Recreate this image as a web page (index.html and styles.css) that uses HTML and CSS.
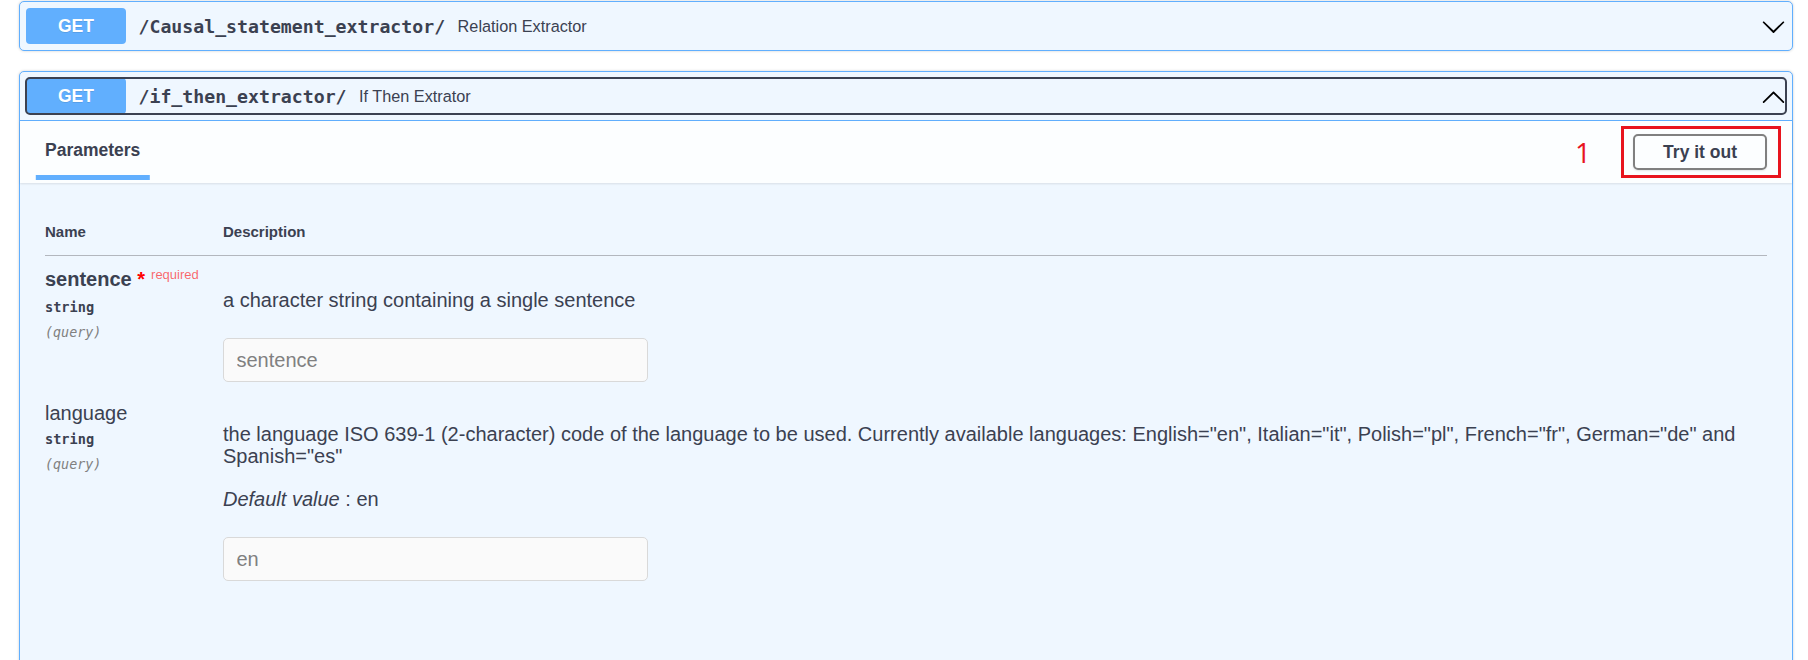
FILE: index.html
```html
<!DOCTYPE html>
<html lang="en">
<head>
<meta charset="utf-8">
<title>Swagger</title>
<link rel="stylesheet" href="styles.css">
</head>
<body>
<div class="page">
  <div class="opblock">
    <div class="summary">
      <div class="summary-control">
        <span class="method">GET</span>
        <span class="path">/Causal_statement_extractor/</span>
        <span class="desc">Relation Extractor</span>
        <svg class="arrow" viewBox="0 0 20 20" width="25" height="25"><path d="M17.418 6.109c.272-.268.709-.268.979 0s.271.701 0 .969l-7.908 7.83c-.27.268-.707.268-.979 0l-7.908-7.83c-.27-.268-.27-.701 0-.969.271-.268.709-.268.979 0L10 13.25l7.418-7.141z"/></svg>
      </div>
    </div>
  </div>

  <div class="opblock open">
    <div class="summary">
      <div class="summary-control focused">
        <span class="method">GET</span>
        <span class="path">/if_then_extractor/</span>
        <span class="desc">If Then Extrator</span>
        <svg class="arrow" viewBox="0 0 20 20" width="25" height="25"><path d="M17.418 14.908c.272.268.709.268.979 0s.271-.701 0-.969l-7.908-7.83c-.27-.268-.707-.268-.979 0l-7.908 7.83c-.27.268-.27.701 0 .969.271.268.709.268.979 0L10 7.767l7.418 7.141z"/></svg>
      </div>
    </div>
    <div class="section-header">
      <div class="tab-header"><h4><span>Parameters</span></h4></div>
      <span class="step">1</span>
      <div class="try-wrap"><button class="btn" type="button">Try it out</button></div>
    </div>
    <div class="table-container">
      <table class="parameters">
        <thead>
          <tr><th class="col-name">Name</th><th class="col-desc">Description</th></tr>
        </thead>
        <tbody>
          <tr>
            <td class="cell-name">
              <div class="param-name required">sentence<span class="star">&nbsp;*</span><span class="req">required</span></div>
              <div class="param-type">string</div>
              <div class="param-in">(query)</div>
            </td>
            <td class="cell-desc">
              <div class="markdown"><p>a character string containing a single sentence</p></div>
              <div class="input-wrap"><input type="text" placeholder="sentence" disabled></div>
            </td>
          </tr>
          <tr>
            <td class="cell-name">
              <div class="param-name">language</div>
              <div class="param-type">string</div>
              <div class="param-in">(query)</div>
            </td>
            <td class="cell-desc">
              <div class="markdown"><p>the language ISO 639-1 (2-character) code of the language to be used. Currently available languages: English="en", Italian="it", Polish="pl", French="fr", German="de" and Spanish="es"</p></div>
              <div class="markdown"><p><i>Default value</i> : en</p></div>
              <div class="input-wrap"><input type="text" value="en" disabled></div>
            </td>
          </tr>
        </tbody>
      </table>
    </div>
  </div>
</div>
</body>
</html>
```
FILE: styles.css
```css
* { box-sizing: border-box; }

body {
  margin: 0;
  background: #fff;
  font-family: "Liberation Sans", Arial, sans-serif;
  color: #3b4151;
}

.page {
  padding: 1px 15px 0 19px;
}

.opblock {
  border: 1px solid #61affe;
  border-radius: 5px;
  background: #eff7ff;
  box-shadow: 0 0 3px rgba(0, 0, 0, .19);
  margin-bottom: 20px;
}

.summary {
  padding: 6px;
}

.opblock.open .summary {
  border-bottom: 1px solid #61affe;
}

.summary-control {
  display: flex;
  align-items: center;
  border-radius: 4px;
}

.summary-control.focused {
  outline: 2px solid #3b4151;
  outline-offset: -1px;
}

.method {
  flex: none;
  min-width: 100px;
  padding: 7.5px 0;
  line-height: 21px;
  background: #61affe;
  border-radius: 4px;
  color: #fff;
  font-size: 17.5px;
  font-weight: 700;
  text-align: center;
  text-shadow: 0 1px 0 rgba(0, 0, 0, .1);
}

.path {
  font-family: "DejaVu Sans Mono", monospace;
  font-weight: 700;
  font-size: 18.2px;
  padding: 0 12.5px;
  color: #3b4151;
}

.desc {
  flex: 1;
  font-size: 16.25px;
  color: #3b4151;
}

.arrow {
  flex: none;
  fill: #000;
}

.section-header {
  display: flex;
  align-items: center;
  min-height: 62px;
  padding: 10px 25px;
  background: rgba(255, 255, 255, .8);
  box-shadow: 0 1px 2px rgba(0, 0, 0, .1);
}

.tab-header {
  flex: 1;
}

.tab-header h4 {
  margin: 0 0 4px;
  font-size: 17.5px;
  font-weight: 700;
  line-height: 20px;
  color: #3b4151;
}

.tab-header span {
  position: relative;
}

.tab-header span::after {
  content: "";
  position: absolute;
  left: 50%;
  transform: translateX(-50%);
  width: 120%;
  height: 5px;
  bottom: -20px;
  background: #61affe;
}

.step {
  font-family: "Open Sans", "Liberation Sans", sans-serif;
  font-size: 28px;
  line-height: 34px;
  color: #e8141e;
  margin-right: 42px;
}

.try-wrap {
  position: relative;
}

.try-wrap::after {
  content: "";
  position: absolute;
  top: -8px;
  bottom: -8px;
  left: -12px;
  right: -14px;
  border: 3px solid #e8141e;
  pointer-events: none;
}

.btn {
  display: block;
  font-family: "Liberation Sans", Arial, sans-serif;
  font-size: 17.5px;
  font-weight: 700;
  line-height: 20px;
  color: #3b4151;
  background: transparent;
  border: 2px solid #808080;
  border-radius: 5px;
  padding: 6px 28px;
  box-shadow: 0 1px 2px rgba(0, 0, 0, .1);
}

.table-container {
  padding: 25px 25px 120px;
}

.parameters {
  width: 100%;
  border-collapse: collapse;
}

.parameters th {
  text-align: left;
  font-size: 15px;
  font-weight: 700;
  line-height: 17px;
  padding: 15px 0;
  border-bottom: 1px solid #b3b7be;
  color: #3b4151;
}

.col-name {
  width: 178px;
}

.parameters td {
  vertical-align: top;
}

.cell-name {
  padding: 12px 0;
}

.cell-desc {
  padding: 12px 0 0;
}

.param-name {
  font-size: 20px;
  line-height: 23px;
  color: #3b4151;
  white-space: nowrap;
}

.param-name.required {
  font-weight: 700;
}

.star {
  color: red;
}

.req {
  position: relative;
  top: -7px;
  padding: 0 6px;
  font-size: 13px;
  font-weight: 400;
  color: rgba(255, 0, 0, .6);
}

.param-type {
  font-family: "DejaVu Sans Mono", monospace;
  font-size: 13.6px;
  font-weight: 700;
  line-height: 16px;
  padding: 6px 0;
  color: #3b4151;
}

.param-in {
  font-family: "DejaVu Sans Mono", monospace;
  font-size: 13.4px;
  font-style: italic;
  line-height: 23px;
  color: #808080;
}

.markdown p {
  margin: 21px 0;
  font-size: 20px;
  line-height: 22px;
  color: #3b4151;
}

.input-wrap {
  padding: 6px 0 8px;
}

.input-wrap input {
  display: block;
  width: 425px;
  height: 44px;
  margin: 0;
  padding: 0 12.5px;
  border: 1px solid #d9d9d9;
  border-radius: 5px;
  background: #fafafa;
  font-family: "Liberation Sans", Arial, sans-serif;
  font-size: 20px;
  color: #808080;
}

.input-wrap input::placeholder {
  color: #808080;
  opacity: 1;
}
```
